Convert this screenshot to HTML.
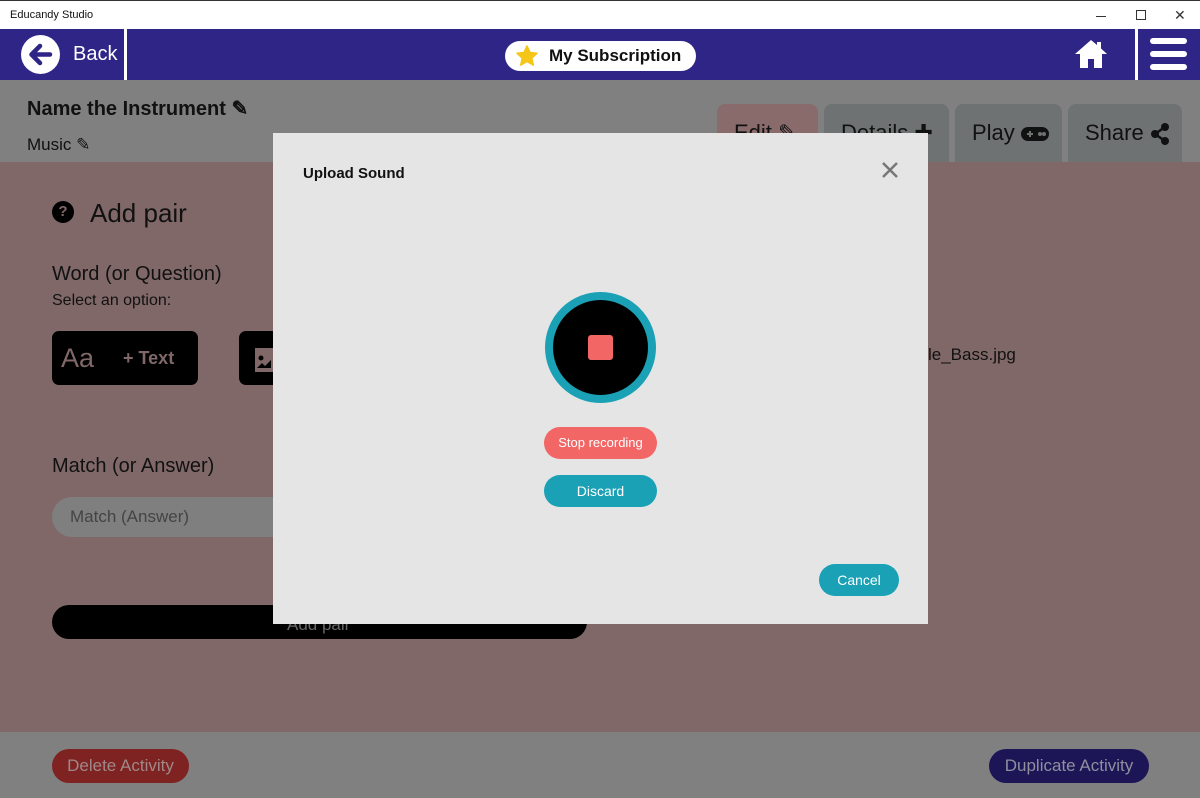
<!DOCTYPE html>
<html><head><meta charset="utf-8"><style>
*{margin:0;padding:0;box-sizing:border-box}
body{width:1200px;height:798px;overflow:hidden;position:relative;font-family:"Liberation Sans",sans-serif;background:#806868}
.a{position:absolute;line-height:1}
.tb{left:0;top:0;width:1200px;height:29px;background:#fff;border-top:1px solid #333}
.nav{left:0;top:29px;width:1200px;height:51px;background:#2e2586}
.hdr{left:0;top:80px;width:1200px;height:82px;background:#808080}
.tab{top:104px;height:58px;border-radius:8px 8px 0 0;background:#6e7272;font-size:22px;color:#111;padding:18px 0 0 17px}
.foot{left:0;top:732px;width:1200px;height:66px;background:#808080}
.pill{border-radius:20px;text-align:center;color:#fff}
</style></head><body>
<div class="a tb"><span class="a" style="left:10px;top:9px;font-size:11px;color:#111">Educandy Studio</span>
<span class="a" style="left:1096px;top:15px;width:10px;height:1px;background:#333"></span>
<span class="a" style="left:1136px;top:9px;width:10px;height:10px;border:1px solid #333"></span>
<span class="a" style="left:1174px;top:7px;font-size:14px;color:#333">✕</span></div>
<div class="a nav">
<div class="a" style="left:21px;top:6px;width:39px;height:39px;border-radius:50%;background:#fff"></div>
<svg class="a" style="left:21px;top:6px" width="39" height="39" viewBox="0 0 39 39"><path d="M29 19.5H11M19 11l-8.5 8.5L19 28" stroke="#2e2586" stroke-width="4.5" fill="none" stroke-linecap="round" stroke-linejoin="round"/></svg>
<span class="a" style="left:73px;top:15px;font-size:20px;color:#fff">Back</span>
<div class="a" style="left:124px;top:0;width:3px;height:51px;background:#fff"></div>
<div class="a" style="left:505px;top:12px;width:191px;height:30px;border-radius:15px;background:#fff"></div>
<svg class="a" style="left:515px;top:15px" width="24" height="24" viewBox="0 0 24 24"><path d="M12 2l3 6.5 7 .8-5.2 4.8 1.5 7L12 17.5 5.7 21.1l1.5-7L2 9.3l7-.8z" fill="#f5c518" stroke="#f5c518" stroke-width="1.5" stroke-linejoin="round"/></svg>
<span class="a" style="left:549px;top:18px;font-size:17px;font-weight:bold;color:#111">My Subscription</span>
<svg class="a" style="left:1074px;top:9px" width="34" height="32" viewBox="0 0 34 32"><path d="M17 2L1 16h5v14h8v-9h6v9h8V16h5L27 10.5V4h-4v3z" fill="#fff"/></svg>
<div class="a" style="left:1135px;top:0;width:3px;height:51px;background:#fff"></div>
<div class="a" style="left:1150px;top:9px;width:37px;height:6px;border-radius:3px;background:#fff"></div>
<div class="a" style="left:1150px;top:22px;width:37px;height:6px;border-radius:3px;background:#fff"></div>
<div class="a" style="left:1150px;top:35px;width:37px;height:6px;border-radius:3px;background:#fff"></div>
</div>
<div class="a hdr">
<span class="a" style="left:27px;top:19px;font-size:20px;color:#111;font-weight:bold">Name the Instrument ✎</span>
<span class="a" style="left:27px;top:56px;font-size:17px;color:#111">Music ✎</span>
</div>
<div class="a tab" style="left:717px;width:101px;background:#8a6b6b">Edit ✎</div>
<div class="a tab" style="left:824px;width:125px">Details ✚</div>
<div class="a tab" style="left:955px;width:107px">Play
<svg style="vertical-align:middle" width="28" height="16" viewBox="0 0 28 16"><rect x="0" y="1" width="28" height="14" rx="7" fill="#111"/><path d="M6 8h6M9 5v6" stroke="#6e7272" stroke-width="2"/><circle cx="19" cy="8" r="2" fill="#6e7272"/><circle cx="23" cy="8" r="2" fill="#6e7272"/></svg></div>
<div class="a tab" style="left:1068px;width:114px">Share
<svg style="vertical-align:middle" width="20" height="22" viewBox="0 0 20 22"><circle cx="15" cy="4" r="4" fill="#111"/><circle cx="15" cy="18" r="4" fill="#111"/><circle cx="5" cy="11" r="4" fill="#111"/><path d="M15 4L5 11l10 7" stroke="#111" stroke-width="2.5" fill="none"/></svg></div>

<div class="a" style="left:52px;top:201px;width:22px;height:22px;border-radius:50%;background:#000;color:#806868;font-size:15px;font-weight:bold;text-align:center;line-height:22px">?</div>
<span class="a" style="left:90px;top:200px;font-size:26px;color:#111">Add pair</span>
<span class="a" style="left:52px;top:264px;font-size:20px;color:#111">Word (or Question)</span>
<span class="a" style="left:52px;top:293px;font-size:16px;color:#111">Select an option:</span>
<div class="a" style="left:52px;top:331px;width:146px;height:54px;border-radius:7px;background:#000"></div>
<span class="a" style="left:61px;top:345px;font-size:27px;color:#806868">Aa</span>
<span class="a" style="left:123px;top:349px;font-size:18px;color:#806868;font-weight:bold">+ Text</span>
<div class="a" style="left:239px;top:331px;width:40px;height:54px;border-radius:7px;background:#000"></div>
<svg class="a" style="left:255px;top:344px" width="18" height="28" viewBox="0 0 18 28"><rect x="0" y="4" width="18" height="24" fill="#806868"/><circle cx="6" cy="14" r="2.5" fill="#000"/><path d="M2 24l5-5 3 3 6-6v8z" fill="#000"/></svg>
<span class="a" style="left:52px;top:456px;font-size:20px;color:#111">Match (or Answer)</span>
<div class="a" style="left:52px;top:497px;width:240px;height:40px;border-radius:20px;background:#7f7f7f"></div>
<span class="a" style="left:70px;top:508px;font-size:17px;color:#444">Match (Answer)</span>
<span class="a" style="left:928px;top:346px;font-size:17px;color:#111">le_Bass.jpg</span>
<div class="a" style="left:52px;top:605px;width:535px;height:34px;border-radius:17px;background:#000"></div>
<span class="a" style="left:287px;top:616px;font-size:17px;color:#666">Add pair</span>

<div class="a foot">
<div class="a pill" style="left:52px;top:17px;width:137px;height:34px;background:#7e2222;color:#a08888;font-size:17px;line-height:34px">Delete Activity</div>
<div class="a pill" style="left:989px;top:17px;width:160px;height:34px;background:#1c1656;color:#8f8f9f;font-size:17px;line-height:34px">Duplicate Activity</div>
</div>

<div class="a" style="left:273px;top:133px;width:655px;height:491px;background:#e5e5e5">
<span class="a" style="left:30px;top:33px;font-size:15px;font-weight:bold;color:#111">Upload Sound</span>
<svg class="a" style="left:608px;top:28px" width="18" height="18" viewBox="0 0 18 18"><path d="M2 2l14 14M16 2L2 16" stroke="#777" stroke-width="2.5"/></svg>
<div class="a" style="left:272px;top:159px;width:111px;height:111px;border-radius:50%;background:#000;border:8px solid #1aa1b5"></div>
<div class="a" style="left:315px;top:202px;width:25px;height:25px;border-radius:3px;background:#f26666"></div>
<div class="a pill" style="left:271px;top:294px;width:113px;height:32px;background:#f26666;font-size:13px;line-height:32px">Stop recording</div>
<div class="a pill" style="left:271px;top:342px;width:113px;height:32px;background:#1aa1b5;font-size:14px;line-height:32px">Discard</div>
<div class="a pill" style="left:546px;top:431px;width:80px;height:32px;background:#1aa1b5;font-size:14px;line-height:32px">Cancel</div>
</div>
</body></html>
